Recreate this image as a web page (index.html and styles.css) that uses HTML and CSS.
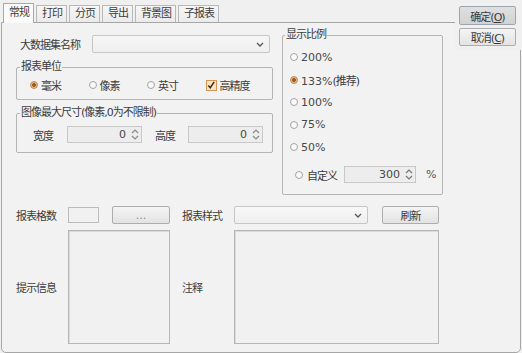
FILE: index.html
```html
<!DOCTYPE html>
<html lang="zh-CN">
<head>
  <meta charset="UTF-8" />
  <title>报表属性</title>
  <link rel="stylesheet" href="styles.css">
</head>
<body>
  <div class="dialog">
    <div class="tabs">
      <span class="tab active">常规</span>
      <span class="tab">打印</span>
      <span class="tab">分页</span>
      <span class="tab">导出</span>
      <span class="tab">背景图</span>
      <span class="tab">子报表</span>
    </div>

    <div class="actions">
      <button class="btn default">确定(<span class="u">O</span>)</button>
      <button class="btn">取消(<span class="u">C</span>)</button>
    </div>

    <div class="pane">
      <div class="top">
        <div class="col-left">
          <div class="field-row">
            <span class="label wide">大数据集名称</span>
            <div class="select name-select">
              <svg class="chev" width="8" height="5" viewBox="0 0 8 5"><path d="M1 1 L4 4 L7 1" fill="none" stroke="#555" stroke-width="1.3"/></svg>
            </div>
          </div>

          <fieldset class="group unit">
            <legend>报表单位</legend>
            <div class="opt-row">
              <label class="opt"><span class="radio on"></span>毫米</label>
              <label class="opt"><span class="radio"></span>像素</label>
              <label class="opt"><span class="radio"></span>英寸</label>
              <label class="opt">
                <span class="check">
                  <svg width="11" height="11" viewBox="0 0 11 11"><path d="M2.5 5.5 L4.7 8 L9 1.5" fill="none" stroke="#3d2a12" stroke-width="1.6"/></svg>
                </span>高精度
              </label>
            </div>
          </fieldset>

          <fieldset class="group size">
            <legend>图像最大尺寸(像素,0为不限制)</legend>
            <div class="size-row">
              <span class="label small">宽度</span>
              <div class="spin size-spin">
                <span class="num">0</span>
                <svg class="arrows" width="8" height="13" viewBox="0 0 8 13"><path d="M1 5 L4 2 L7 5 M1 8 L4 11 L7 8" fill="none" stroke="#888" stroke-width="1.2"/></svg>
              </div>
              <span class="label small gap">高度</span>
              <div class="spin size-spin">
                <span class="num">0</span>
                <svg class="arrows" width="8" height="13" viewBox="0 0 8 13"><path d="M1 5 L4 2 L7 5 M1 8 L4 11 L7 8" fill="none" stroke="#888" stroke-width="1.2"/></svg>
              </div>
            </div>
          </fieldset>
        </div>

        <fieldset class="group scale">
          <legend>显示比例</legend>
          <div class="scale-list">
            <label class="scale-opt"><span class="radio"></span><span class="num">200%</span></label>
            <label class="scale-opt"><span class="radio on"></span><span><span class="num">133%</span>(推荐)</span></label>
            <label class="scale-opt"><span class="radio"></span><span class="num">100%</span></label>
            <label class="scale-opt"><span class="radio"></span><span class="num">75%</span></label>
            <label class="scale-opt"><span class="radio"></span><span class="num">50%</span></label>
          </div>
          <div class="custom-row">
            <span class="radio"></span>
            <span class="custom-label">自定义</span>
            <div class="spin custom-spin">
              <span class="num">300</span>
              <svg class="arrows" width="8" height="13" viewBox="0 0 8 13"><path d="M1 5 L4 2 L7 5 M1 8 L4 11 L7 8" fill="none" stroke="#777" stroke-width="1.2"/></svg>
            </div>
            <span class="num pct">%</span>
          </div>
        </fieldset>
      </div>

      <div class="bottom">
        <span class="label">报表格数</span>
        <div class="cell">
          <div class="box"></div>
          <button class="btn dots">...</button>
        </div>
        <span class="label pad">报表样式</span>
        <div class="cell">
          <div class="select style-select">
            <svg class="chev" width="8" height="5" viewBox="0 0 8 5"><path d="M1 1 L4 4 L7 1" fill="none" stroke="#555" stroke-width="1.3"/></svg>
          </div>
          <button class="btn refresh">刷新</button>
        </div>

        <span class="label">提示信息</span>
        <div class="area"></div>
        <span class="label pad">注释</span>
        <div class="area"></div>
      </div>
    </div>
  </div>
</body>
</html>
```

FILE: styles.css
```css
body {
  margin: 0;
  background: #f0f0f0;
  font-family: "DejaVu Sans", "Noto Sans CJK SC", sans-serif;
  font-size: 11px;
  letter-spacing: -1px;
  color: #3c3c3c;
}
.dialog {
  position: relative;
  width: 522px;
  height: 353px;
}
.num {
  letter-spacing: 0;
  color: #484848;
}
.u {
  text-decoration: underline;
}

/* tabs */
.tabs {
  display: flex;
  align-items: flex-end;
  height: 22px;
  padding-left: 3px;
  gap: 2px;
}
.tab {
  box-sizing: border-box;
  height: 17px;
  line-height: 15px;
  padding: 0 4px 0 5px;
  border: 1px solid #b8b8b8;
  border-bottom: none;
  background: linear-gradient(#f6f6f6, #ebebeb);
}
.tab.active {
  position: relative;
  z-index: 1;
  height: 20px;
  line-height: 18px;
  margin-bottom: -1px;
  border-color: #a8a8a8;
  background: #fafafa;
}

/* main pane */
.pane {
  box-sizing: border-box;
  width: 520px;
  height: 331px;
  margin-left: 1px;
  border: 1px solid #a6a6a6;
  border-radius: 0 0 5px 5px;
  background: #f2f2f2;
}
.top {
  display: flex;
  gap: 9px;
  padding-left: 14px;
}
.col-left {
  width: 257px;
}
.field-row {
  display: flex;
  align-items: center;
  height: 18px;
  margin-top: 12px;
}
.label {
  display: flex;
  align-items: center;
  white-space: nowrap;
}
.label.wide {
  width: 72px;
  padding-left: 4px;
}
.select {
  box-sizing: border-box;
  display: flex;
  align-items: center;
  justify-content: flex-end;
  height: 18px;
  padding-right: 5px;
  border: 1px solid #c6c6c6;
  border-radius: 2px;
  background: linear-gradient(#f7f7f7, #efefef);
}
.name-select {
  width: 178px;
}

/* group boxes */
.group {
  margin: 0;
  min-width: 0;
  border: 1px solid #b4b4b4;
  border-radius: 2px;
}
.group legend {
  padding: 0 1px;
  line-height: 12px;
}
.unit {
  margin-top: 8px;
  padding: 6px 8px 8px 3px;
}
.opt-row {
  display: flex;
  align-items: center;
  height: 12px;
  margin-left: 10px;
}
.opt {
  display: flex;
  align-items: center;
  gap: 3px;
  width: 61px;
  white-space: nowrap;
}
.radio {
  box-sizing: border-box;
  display: inline-block;
  flex: none;
  width: 8px;
  height: 8px;
  border: 1px solid #a4a4a4;
  border-radius: 50%;
  background: #f9f9f9;
}
.radio.on {
  border-color: #c08a55;
  background: radial-gradient(circle, #9c5e26 0 1.6px, #e7b888 2.2px);
}
.check {
  box-sizing: border-box;
  display: inline-flex;
  flex: none;
  width: 11px;
  height: 11px;
  border: 1px solid #d09656;
  background: #fbe3c2;
}
.check svg {
  margin: -1px 0 0 -1px;
}

.size {
  margin-top: 7px;
  padding: 7px 8px 9px 3px;
}
.size-row {
  display: flex;
  align-items: center;
  height: 17px;
  margin-left: 13px;
}
.label.small {
  width: 34px;
}
.label.gap {
  width: 33px;
  margin-left: 13px;
}
.spin {
  box-sizing: border-box;
  display: flex;
  align-items: center;
  justify-content: flex-end;
  height: 17px;
  border: 1px solid #c8c8c8;
  background: #ededed;
}
.size-spin {
  width: 75px;
}
.arrows {
  margin: 0 2px 0 5px;
}

/* display scale */
.scale {
  width: 161px;
  box-sizing: border-box;
  margin-top: 6px;
  padding: 5px 4px 11px 2px;
}
.scale-opt {
  display: flex;
  align-items: center;
  gap: 3px;
  height: 22.5px;
  margin-left: 5px;
  white-space: nowrap;
}
.custom-row {
  display: flex;
  align-items: center;
  height: 17px;
  margin: 7.5px 0 0 10px;
}
.custom-label {
  margin-left: 4px;
  width: 33px;
}
.custom-spin {
  width: 72px;
  margin-left: 4px;
}
.pct {
  margin-left: 10px;
  color: #555;
}

/* bottom area */
.bottom {
  display: grid;
  grid-template-columns: 52px 102px 64px 205px;
  grid-template-rows: 18px 114px;
  row-gap: 6px;
  margin-top: 11px;
  padding-left: 14px;
}
.label.pad {
  padding-left: 12px;
}
.cell {
  display: flex;
  align-items: center;
}
.box {
  box-sizing: border-box;
  width: 31px;
  height: 16px;
  border: 1px solid #bcbcbc;
  background: #f1f1f1;
}
.area {
  box-sizing: border-box;
  border: 1px solid #b6b6b6;
  box-shadow: inset 1px 1px 0 #dadada;
  background: #f1f1f1;
}
.style-select {
  width: 134px;
}

/* buttons */
.btn {
  box-sizing: border-box;
  height: 18px;
  padding: 0;
  border: 1px solid #adadad;
  border-radius: 2px;
  background: linear-gradient(#f4f4f4, #e3e3e3);
  font: inherit;
  letter-spacing: -1px;
  color: #3a3a3a;
}
.dots {
  width: 58px;
  margin-left: 13px;
  color: #888;
  letter-spacing: 0;
}
.refresh {
  width: 57px;
  margin-left: 14px;
}
.actions {
  position: absolute;
  top: 0;
  right: 0;
  display: flex;
  flex-direction: column;
  gap: 3px;
  width: 67px;
  box-sizing: border-box;
  padding: 6px 6px 4px 4px;
  background: #f0f0f0;
}
.actions .btn {
  width: 57px;
}
.actions .default {
  height: 19px;
  border-color: #9aa6b2;
  background: linear-gradient(#e0e0e0, #d2d2d2);
}
```
